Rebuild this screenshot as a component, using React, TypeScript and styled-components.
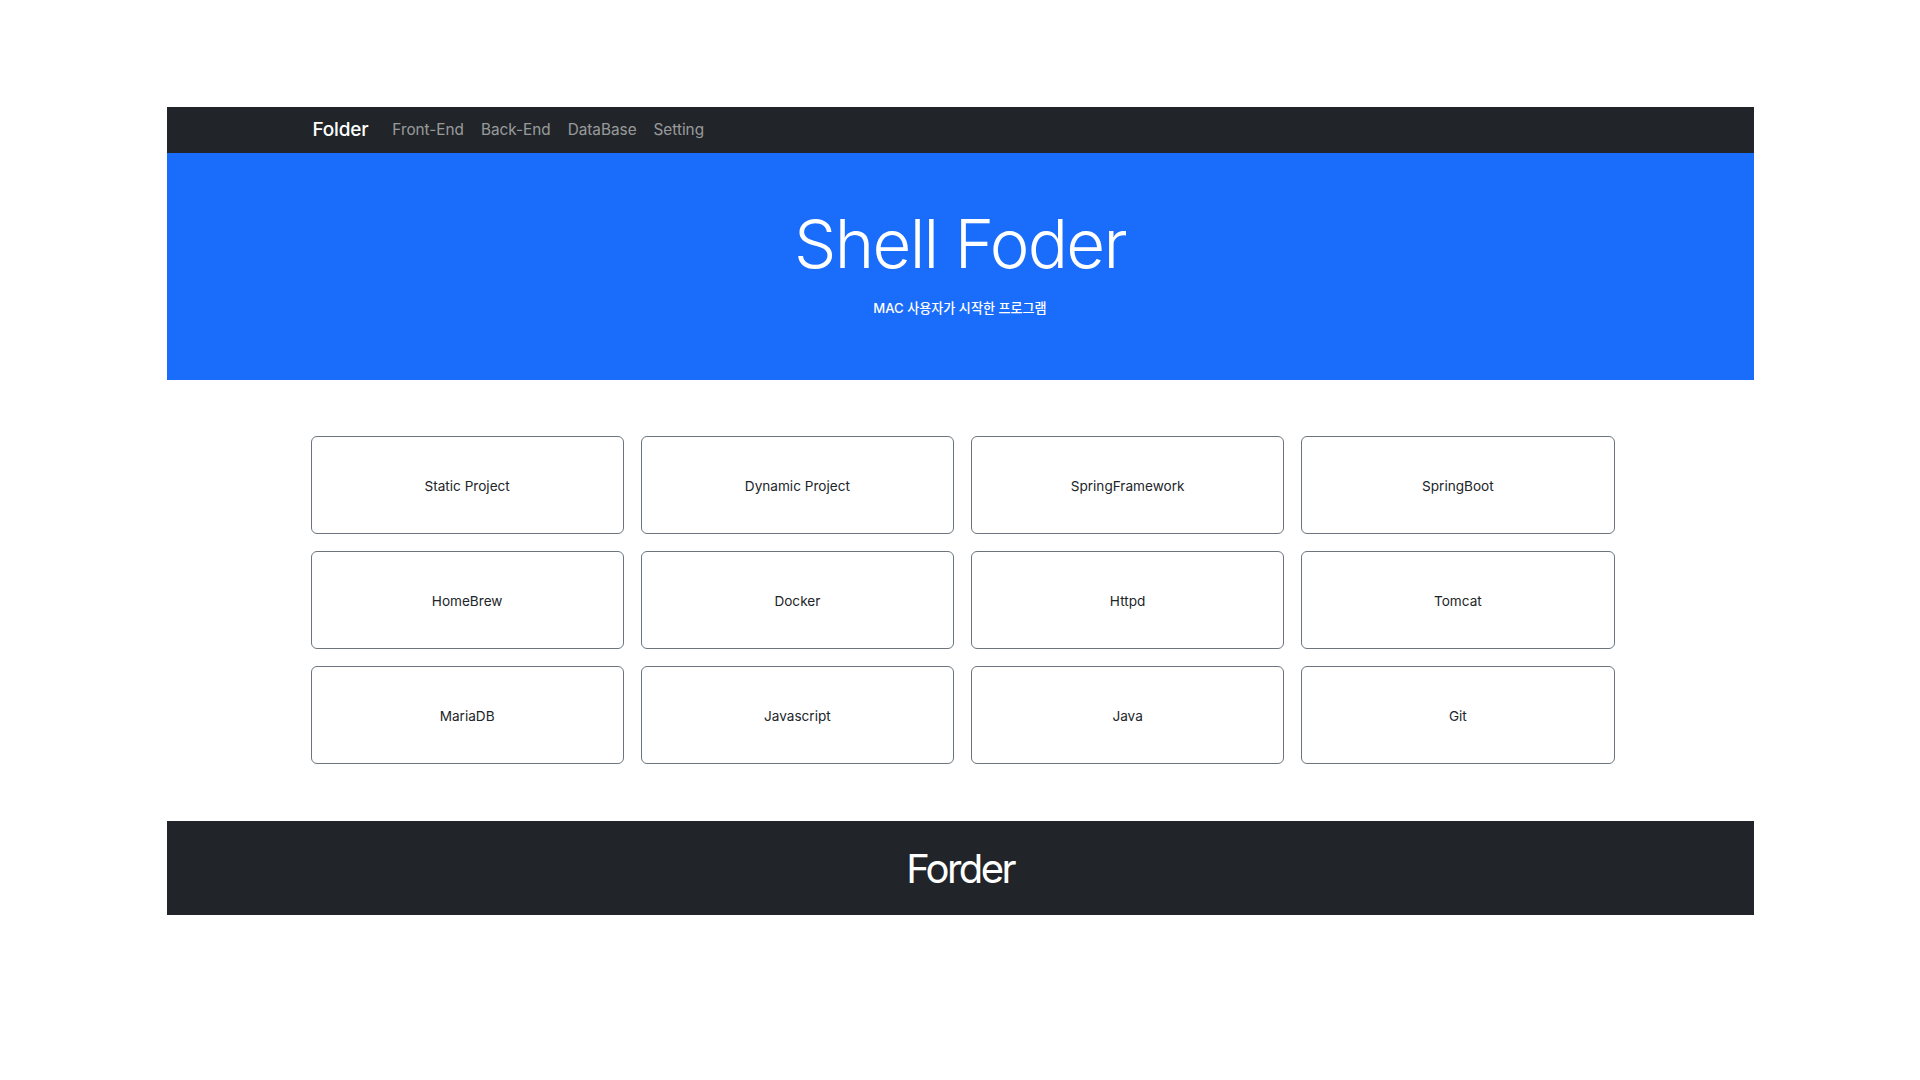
import React from "react";
import styled, { createGlobalStyle } from "styled-components";

const GlobalStyle = createGlobalStyle`
  html, body {
    margin: 0;
    padding: 0;
    background: #ffffff;
  }
  body {
    font-family: "Inter", "Noto Sans CJK KR", "Noto Sans", sans-serif;
    color: #212529;
  }
  * { box-sizing: border-box; }
`;

const Page = styled.div`
  padding-top: 107px;
  padding-bottom: 165px;
`;

const Frame = styled.div`
  width: 1587px;
  margin: 0 auto;
`;

const NavBar = styled.nav`
  height: 46px;
  background: #212529;
  display: flex;
  align-items: center;
  padding-left: 146px;
  padding-bottom: 1px;
  gap: 17px;
`;

const Brand = styled.a`
  font-size: 19px;
  font-weight: 500;
  color: #ffffff;
  text-decoration: none;
  margin-right: 7px;
  line-height: 1;
  letter-spacing: -0.2px;
`;

const NavLink = styled.a`
  font-size: 15.3px;
  font-weight: 400;
  color: rgba(255, 255, 255, 0.55);
  text-decoration: none;
  line-height: 1;
`;

const Hero = styled.header`
  height: 227px;
  background: #1a6cfb;
  color: #ffffff;
  display: flex;
  flex-direction: column;
  align-items: center;
  padding-top: 57px;
`;

const HeroTitle = styled.h1`
  margin: 0;
  font-size: 67px;
  font-weight: 300;
  line-height: 1;
  letter-spacing: -1.7px;
`;

const HeroSub = styled.p`
  margin: 25px 0 0;
  font-size: 13.1px;
  font-weight: 500;
  line-height: 1;
`;

const Main = styled.main`
  padding: 56px 0 57px 144px;
`;

const Grid = styled.div`
  width: 1304px;
  display: grid;
  grid-template-columns: repeat(4, 1fr);
  column-gap: 17px;
  row-gap: 17px;
`;

const Card = styled.a`
  height: 98px;
  border: 1px solid #6c757d;
  border-radius: 6px;
  display: flex;
  align-items: center;
  justify-content: center;
  padding-top: 2px;
  font-size: 13.6px;
  color: #212529;
  text-decoration: none;
`;

const Footer = styled.footer`
  height: 94px;
  background: #212529;
  display: flex;
  align-items: center;
  justify-content: center;
  padding-top: 2px;
`;

const FooterTitle = styled.h2`
  margin: 0;
  color: #ffffff;
  font-size: 40px;
  font-weight: 400;
  line-height: 1;
  letter-spacing: -2.6px;
`;

const items = [
  "Static Project",
  "Dynamic Project",
  "SpringFramework",
  "SpringBoot",
  "HomeBrew",
  "Docker",
  "Httpd",
  "Tomcat",
  "MariaDB",
  "Javascript",
  "Java",
  "Git",
];

export default function App() {
  return (
    <>
      <GlobalStyle />
      <Page>
        <Frame>
          <NavBar>
            <Brand href="#">Folder</Brand>
            <NavLink href="#">Front-End</NavLink>
            <NavLink href="#">Back-End</NavLink>
            <NavLink href="#">DataBase</NavLink>
            <NavLink href="#">Setting</NavLink>
          </NavBar>
          <Hero>
            <HeroTitle>Shell Foder</HeroTitle>
            <HeroSub>MAC 사용자가 시작한 프로그램</HeroSub>
          </Hero>
          <Main>
            <Grid>
              {items.map((t) => (
                <Card key={t} href="#">
                  {t}
                </Card>
              ))}
            </Grid>
          </Main>
          <Footer>
            <FooterTitle>Forder</FooterTitle>
          </Footer>
        </Frame>
      </Page>
    </>
  );
}
